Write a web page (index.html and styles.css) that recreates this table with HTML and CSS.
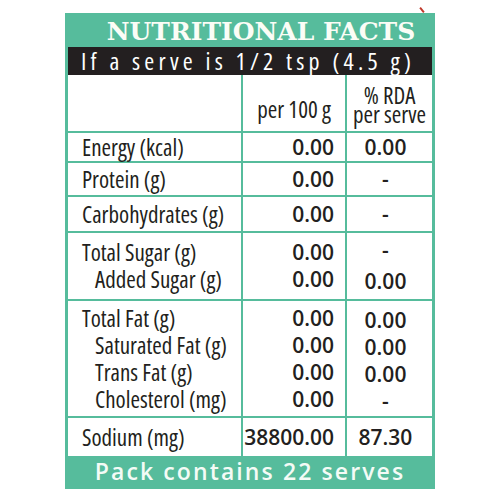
FILE: index.html
```html
<!DOCTYPE html>
<html lang="en">

<head>
    <meta charset="UTF-8">
    <meta name="viewport" content="width=device-width, initial-scale=1.0">
    <title>Nutritional Facts</title>
    <link rel="stylesheet" href="styles.css">
</head>

<body>
    <span class="mark"></span>
    <div class="label">
        <div class="title">NUTRITIONAL FACTS</div>
        <div class="serve">If a serve is 1/2 tsp (4.5 g)</div>
        <table class="facts">
            <colgroup>
                <col class="c-name">
                <col class="c-per">
                <col class="c-rda">
            </colgroup>
            <tr class="head">
                <td></td>
                <td class="per">per 100 g</td>
                <td class="rda">% RDA<br>per serve</td>
            </tr>
            <tr class="r-energy">
                <td class="name">Energy (kcal)</td>
                <td class="num">0.00</td>
                <td class="pct">0.00</td>
            </tr>
            <tr class="r-protein">
                <td class="name">Protein (g)</td>
                <td class="num">0.00</td>
                <td class="pct">-</td>
            </tr>
            <tr class="r-carbs">
                <td class="name">Carbohydrates (g)</td>
                <td class="num">0.00</td>
                <td class="pct">-</td>
            </tr>
            <tr class="r-sugar">
                <td class="name">
                    <div class="line">Total Sugar (g)</div>
                    <div class="line sub">Added Sugar (g)</div>
                </td>
                <td class="num">
                    <div class="line">0.00</div>
                    <div class="line">0.00</div>
                </td>
                <td class="pct">
                    <div class="line">-</div>
                    <div class="line low">0.00</div>
                </td>
            </tr>
            <tr class="r-fat">
                <td class="name">
                    <div class="line">Total Fat (g)</div>
                    <div class="line sub">Saturated Fat (g)</div>
                    <div class="line sub">Trans Fat (g)</div>
                    <div class="line sub">Cholesterol (mg)</div>
                </td>
                <td class="num">
                    <div class="line">0.00</div>
                    <div class="line">0.00</div>
                    <div class="line">0.00</div>
                    <div class="line">0.00</div>
                </td>
                <td class="pct shift">
                    <div class="line">0.00</div>
                    <div class="line">0.00</div>
                    <div class="line">0.00</div>
                    <div class="line">-</div>
                </td>
            </tr>
            <tr class="r-sodium">
                <td class="name">Sodium (mg)</td>
                <td class="num">38800.00</td>
                <td class="pct">87.30</td>
            </tr>
        </table>
        <div class="pack">Pack contains 22 serves</div>
    </div>
</body>

</html>
```

FILE: styles.css
```css
/* Reset */
* {
    margin: 0;
    padding: 0;
    box-sizing: border-box;
}

body {
    background: #ffffff;
    font-family: "Open Sans", "Noto Sans", sans-serif;
    font-stretch: 75%;
    color: #231f20;
    position: relative;
    width: 500px;
    height: 500px;
}

.mark {
    position: absolute;
    left: 421px;
    top: 7px;
    width: 2px;
    height: 6px;
    background: #c0392b;
    transform: rotate(-40deg);
}

.label {
    width: 370px;
    margin: 13px 0 0 65px;
    border: 3px solid #56bc9c;
    background: #ffffff;
}

.title {
    height: 31px;
    background: #56bc9c;
    color: #fbfdf6;
    font-family: "DejaVu Serif", "Liberation Serif", serif;
    font-stretch: normal;
    font-weight: bold;
    font-size: 25px;
    line-height: 32px;
    text-align: center;
    padding-left: 22px;
}

.serve {
    height: 28px;
    background: #231f20;
    color: #ffffff;
    font-size: 24px;
    font-stretch: 87.5%;
    line-height: 28px;
    letter-spacing: 4.2px;
    padding-left: 13px;
    white-space: nowrap;
}

/* Facts table */
.facts {
    width: 100%;
    border-collapse: collapse;
    table-layout: fixed;
}

.c-name {
    width: 174px;
}

.c-per {
    width: 104px;
}

.facts td {
    border: 2px solid #56bc9c;
    vertical-align: middle;
    padding: 0;
    line-height: 24px;
}

.facts tr:first-child td {
    border-top: none;
}

.facts tr:last-child td {
    border-bottom: none;
}

.facts td:first-child {
    border-left: none;
}

.facts td:last-child {
    border-right: none;
}

.head {
    height: 57px;
}

.per {
    font-size: 23px;
    text-align: center;
    padding-top: 12px !important;
}

.rda {
    font-size: 23px;
    line-height: 19px !important;
    text-align: center;
    padding-top: 4px !important;
}

.r-energy {
    height: 30px;
}

.r-protein {
    height: 34px;
}

.r-carbs {
    height: 36px;
}

.r-sugar {
    height: 68px;
}

.r-fat {
    height: 117px;
}

.r-sodium {
    height: 39px;
}

.name {
    font-size: 23px;
    padding-left: 14px !important;
    white-space: nowrap;
}

.num {
    font-stretch: normal;
    font-weight: 600;
    font-size: 21px;
    text-align: right;
    padding-right: 11px !important;
}

.pct {
    font-stretch: normal;
    font-weight: 600;
    font-size: 21px;
    text-align: center;
    padding-right: 8px !important;
}

.line {
    line-height: 27px;
}

.sub {
    padding-left: 13px;
}

.low {
    padding-top: 4px;
}

.shift {
    padding-top: 4px !important;
}

.pack {
    height: 30px;
    background: #56bc9c;
    color: #f4fbf6;
    font-stretch: normal;
    font-weight: 600;
    font-size: 23px;
    line-height: 30px;
    letter-spacing: 2.1px;
    text-align: center;
}
```
